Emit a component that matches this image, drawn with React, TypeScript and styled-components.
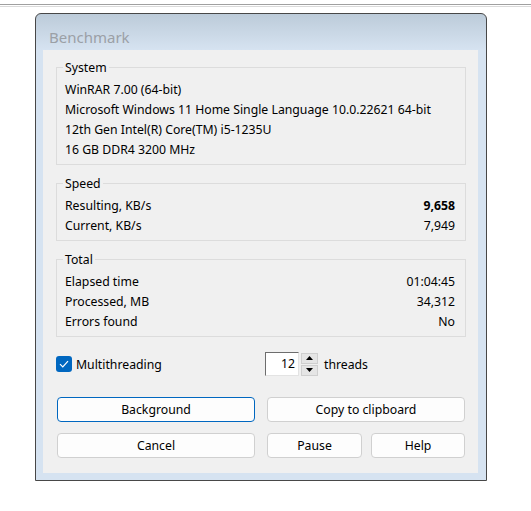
import React from "react";
import styled, { createGlobalStyle } from "styled-components";

const GlobalStyle = createGlobalStyle`
  html, body {
    margin: 0;
    padding: 0;
    background: #ffffff;
  }
  body {
    font-family: "Noto Sans", "Open Sans", sans-serif;
    font-size: 12.25px;
    color: #000000;
  }
`;

const Page = styled.div`
  width: 531px;
  height: 511px;
  padding-top: 4px;
  box-sizing: border-box;
  overflow: hidden;
`;

const TopRule = styled.div`
  height: 1px;
  border-top: 1px solid #a0a0a0;
  border-bottom: 1px solid #dadada;
`;

const Window = styled.div`
  width: 452px;
  margin: 6px 0 0 35px;
  box-sizing: border-box;
  border: 1px solid #474747;
  border-radius: 6px 6px 0 0;
  background: linear-gradient(to bottom, #bccbd9 0px, #d6e3f1 36px, #d6e3f1 100%);
  padding: 0 8px 7px 7px;
`;

const TitleBar = styled.div`
  height: 36px;
  box-sizing: border-box;
  display: flex;
  align-items: center;
  padding: 10px 0 0 6px;
  font-size: 15px;
  color: #9ba0a6;
`;

const Client = styled.div`
  height: 423px;
  box-sizing: border-box;
  background: #f0f0f0;
  padding: 17px 12px 0 13px;
  display: flex;
  flex-direction: column;
`;

const GroupBox = styled.div<{ $gap?: number }>`
  position: relative;
  border: 1px solid #dcdcdc;
  padding: 11px 10px 5px 8px;
  margin-top: ${(p) => p.$gap ?? 0}px;
`;

const Legend = styled.span`
  position: absolute;
  left: 6px;
  top: -10px;
  padding: 0 2px 0 2px;
  line-height: 19px;
  background: #f0f0f0;
`;

const Row = styled.div`
  height: 20px;
  line-height: 22px;
  display: flex;
  justify-content: space-between;
  white-space: nowrap;
`;

const Value = styled.span<{ $bold?: boolean }>`
  font-weight: ${(p) => (p.$bold ? 700 : 400)};
`;

const OptionsRow = styled.div`
  display: flex;
  align-items: center;
  height: 24px;
  margin-top: 15px;
`;

const CheckLabel = styled.label`
  width: 209px;
  display: flex;
  align-items: center;
  gap: 4px;
`;

const CheckBox = styled.span`
  width: 16px;
  height: 16px;
  border-radius: 3px;
  background: #0067c0;
  display: flex;
  align-items: center;
  justify-content: center;
`;

const SpinWrap = styled.div`
  display: flex;
  align-items: center;
  gap: 2px;
`;

const SpinInput = styled.div`
  width: 34px;
  height: 24px;
  box-sizing: border-box;
  background: #ffffff;
  border-top: 1px solid #6d6d6d;
  border-left: 1px solid #6d6d6d;
  border-right: 1px solid #e3e3e3;
  border-bottom: 1px solid #e3e3e3;
  text-align: right;
  padding-right: 3px;
  line-height: 22px;
`;

const SpinButtons = styled.div`
  display: flex;
  flex-direction: column;
  gap: 1px;
`;

const SpinButton = styled.div`
  width: 17px;
  height: 11px;
  box-sizing: border-box;
  background: #e5e5e5;
  border: 1px solid #cfcfcf;
  display: flex;
  align-items: center;
  justify-content: center;
`;

const ThreadsText = styled.span`
  margin-left: 4px;
`;

const ButtonRow = styled.div<{ $top: number }>`
  display: flex;
  gap: 12px;
  margin: ${(p) => p.$top}px 1px 0 1px;
`;

const SubRow = styled.div`
  display: flex;
  gap: 9px;
`;

const Button = styled.button<{ $w: number; $focus?: boolean }>`
  width: ${(p) => p.$w}px;
  height: 25px;
  box-sizing: border-box;
  font-family: inherit;
  font-size: 12.25px;
  color: #000000;
  background: #fdfdfd;
  border: 1px solid ${(p) => (p.$focus ? "#0067c0" : "#d0d0d0")};
  border-radius: 4px;
  padding: 0;
`;

const Arrow = ({ up }: { up?: boolean }) => (
  <svg width="7" height="4" viewBox="0 0 7 4">
    <path d={up ? "M0 4 L3.5 0 L7 4 Z" : "M0 0 L3.5 4 L7 0 Z"} fill="#000" />
  </svg>
);

const system = [
  "WinRAR 7.00 (64-bit)",
  "Microsoft Windows 11 Home Single Language 10.0.22621 64-bit",
  "12th Gen Intel(R) Core(TM) i5-1235U",
  "16 GB DDR4 3200 MHz",
];

const App: React.FC = () => {
  return (
    <Page>
      <GlobalStyle />
      <TopRule />
      <Window>
        <TitleBar>Benchmark</TitleBar>
        <Client>
          <GroupBox>
            <Legend>System</Legend>
            {system.map((line) => (
              <Row key={line}>{line}</Row>
            ))}
          </GroupBox>

          <GroupBox $gap={18}>
            <Legend>Speed</Legend>
            <Row>
              <span>Resulting, KB/s</span>
              <Value $bold>9,658</Value>
            </Row>
            <Row>
              <span>Current, KB/s</span>
              <Value>7,949</Value>
            </Row>
          </GroupBox>

          <GroupBox $gap={18}>
            <Legend>Total</Legend>
            <Row>
              <span>Elapsed time</span>
              <Value>01:04:45</Value>
            </Row>
            <Row>
              <span>Processed, MB</span>
              <Value>34,312</Value>
            </Row>
            <Row>
              <span>Errors found</span>
              <Value>No</Value>
            </Row>
          </GroupBox>

          <OptionsRow>
            <CheckLabel>
              <CheckBox>
                <svg width="10" height="8" viewBox="0 0 10 8">
                  <path d="M1 4.2 L3.8 7 L9 1.2" fill="none" stroke="#fff" strokeWidth="1.2" />
                </svg>
              </CheckBox>
              Multithreading
            </CheckLabel>
            <SpinWrap>
              <SpinInput>12</SpinInput>
              <SpinButtons>
                <SpinButton>
                  <Arrow up />
                </SpinButton>
                <SpinButton>
                  <Arrow />
                </SpinButton>
              </SpinButtons>
              <ThreadsText>threads</ThreadsText>
            </SpinWrap>
          </OptionsRow>

          <ButtonRow $top={21}>
            <Button $w={198} $focus>Background</Button>
            <Button $w={198}>Copy to clipboard</Button>
          </ButtonRow>
          <ButtonRow $top={11}>
            <Button $w={198}>Cancel</Button>
            <SubRow>
              <Button $w={95}>Pause</Button>
              <Button $w={94}>Help</Button>
            </SubRow>
          </ButtonRow>
        </Client>
      </Window>
    </Page>
  );
};

export default App;
